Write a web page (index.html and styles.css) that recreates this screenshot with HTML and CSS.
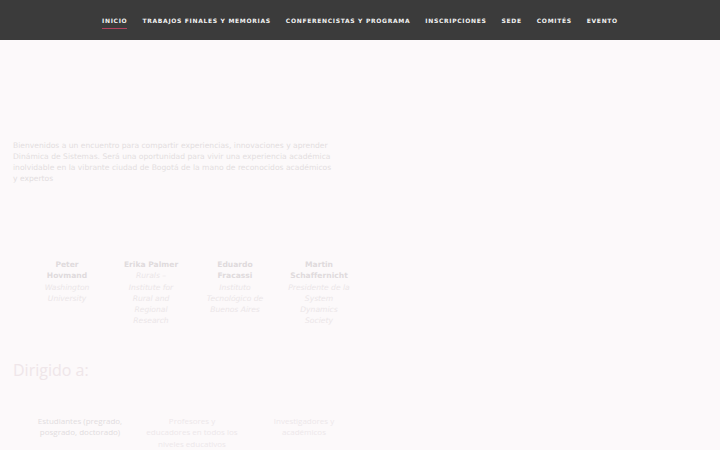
FILE: index.html
```html
<!DOCTYPE html>
<html lang="es">
<head>
<meta charset="utf-8">
<title>Dinámica de Sistemas</title>
<link rel="stylesheet" href="styles.css">
</head>
<body>
<nav class="nav">
  <ul class="nav-list">
    <li><a class="nav-link active" href="#">Inicio</a></li>
    <li><a class="nav-link" href="#">Trabajos finales y memorias</a></li>
    <li><a class="nav-link" href="#">Conferencistas y programa</a></li>
    <li><a class="nav-link" href="#">Inscripciones</a></li>
    <li><a class="nav-link" href="#">Sede</a></li>
    <li><a class="nav-link" href="#">Comités</a></li>
    <li><a class="nav-link" href="#">Evento</a></li>
  </ul>
</nav>
<main class="main">
  <p class="intro">Bienvenidos a un encuentro para compartir experiencias, innovaciones y aprender Dinámica de Sistemas. Será una oportunidad para vivir una experiencia académica inolvidable en la vibrante ciudad de Bogotá de la mano de reconocidos académicos y expertos</p>
  <div class="speakers">
    <div class="speaker"><div class="name">Peter Hovmand</div><div class="aff">Washington University</div></div>
    <div class="speaker"><div class="name">Erika Palmer</div><div class="aff">Rurals – Institute for Rural and Regional Research</div></div>
    <div class="speaker"><div class="name">Eduardo Fracassi</div><div class="aff">Instituto Tecnológico de Buenos Aires</div></div>
    <div class="speaker"><div class="name">Martin Schaffernicht</div><div class="aff">Presidente de la System Dynamics Society</div></div>
  </div>
  <h2 class="title">Dirigido a:</h2>
  <div class="audience">
    <div class="aud aud-strong">Estudiantes (pregrado, posgrado, doctorado)</div>
    <div class="aud">Profesores y<br>educadores en todos los niveles educativos</div>
    <div class="aud">Investigadores y académicos</div>
  </div>
</main>
</body>
</html>
```
FILE: styles.css
```css
html, body {
  margin: 0;
  padding: 0;
  background: #fcf9fa;
  overflow: hidden;
}
body {
  font-family: "DejaVu Sans", sans-serif;
}
.nav {
  height: 40px;
  background: #3b3b3b;
  display: flex;
  justify-content: center;
}
.nav-list {
  list-style: none;
  margin: 0;
  padding: 0;
  display: flex;
  gap: 15px;
  align-items: flex-start;
}
.nav-link {
  display: block;
  padding-top: 17px;
  padding-bottom: 4px;
  font-family: "DejaVu Sans", sans-serif;
  font-weight: bold;
  font-size: 6px;
  letter-spacing: 0.68px;
  text-transform: uppercase;
  color: #f2f2f2;
  text-decoration: none;
  line-height: 7px;
  border-bottom: 1.5px solid transparent;
}
.nav-link.active {
  border-bottom-color: #b0435f;
}
.main {
  width: 360px;
  padding: 100px 0 0 13px;
  box-sizing: border-box;
}
.intro {
  margin: 0;
  width: 320px;
  font-size: 7.6px;
  line-height: 11px;
  color: #e3dee0;
}
.speakers {
  display: grid;
  grid-template-columns: repeat(4, 84px);
  margin: 75px 0 0 12px;
}
.speaker {
  padding: 0 11px;
  text-align: center;
  font-size: 7.6px;
  line-height: 11.3px;
}
.name {
  font-weight: bold;
  color: #e0dbdd;
}
.aff {
  font-style: italic;
  color: #ebe6e8;
}
.title {
  margin: 31px 0 0 0;
  font-family: "Open Sans", sans-serif;
  font-weight: 400;
  font-size: 16px;
  line-height: 24px;
  color: #efe6e9;
}
.audience {
  display: grid;
  grid-template-columns: repeat(3, 112px);
  margin: 33px 0 0 11px;
}
.aud {
  padding: 0 8px;
  text-align: center;
  font-family: "Open Sans", sans-serif;
  font-size: 8px;
  line-height: 11.5px;
  color: #ede8ea;
}
.aud-strong {
  color: #e2dde0;
  font-weight: 400;
}
```
